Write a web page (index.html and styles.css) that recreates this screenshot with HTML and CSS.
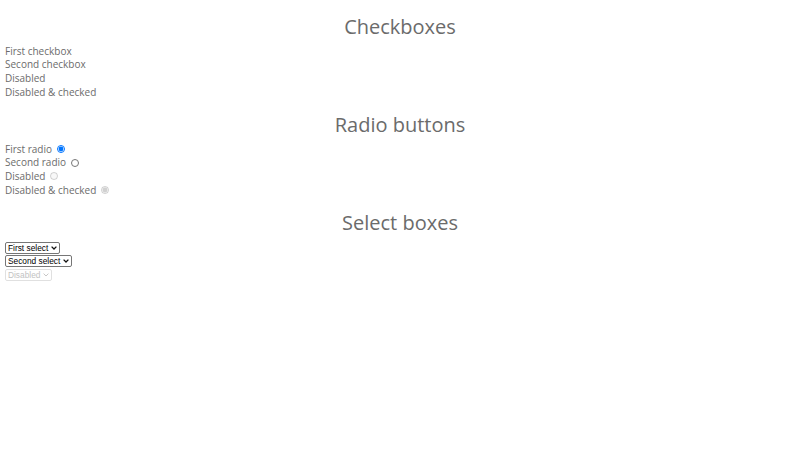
FILE: index.html
```html
<!DOCTYPE html>
<html lang="en">
<head>
    <meta charset="UTF-8">
    <meta name="viewport" content="width=device-width, initial-scale=1.0">
    <title>Form controls</title>
    <link rel="stylesheet" href="styles.css">
</head>
<body>
    <!-- Checkboxes -->
    <section class="group">
        <h1>Checkboxes</h1>
        <label class="option"><input type="checkbox" class="check"> First checkbox</label>
        <label class="option"><input type="checkbox" class="check" checked> Second checkbox</label>
        <label class="option"><input type="checkbox" class="check" disabled> Disabled</label>
        <label class="option"><input type="checkbox" class="check" disabled checked> Disabled &amp; checked</label>
    </section>

    <!-- Radio buttons -->
    <section class="group">
        <h1>Radio buttons</h1>
        <label class="option">First radio <input type="radio" name="demo" class="radio" checked></label>
        <label class="option">Second radio <input type="radio" name="demo" class="radio"></label>
        <label class="option">Disabled <input type="radio" name="off" class="radio" disabled></label>
        <label class="option">Disabled &amp; checked <input type="radio" name="off2" class="radio" disabled checked></label>
    </section>

    <!-- Select boxes -->
    <section class="group">
        <h1>Select boxes</h1>
        <div class="field">
            <select class="picker">
                <option>First select</option>
                <option>Option 2</option>
            </select>
        </div>
        <div class="field">
            <select class="picker">
                <option>Second select</option>
                <option>Option 2</option>
            </select>
        </div>
        <div class="field">
            <select class="picker" disabled>
                <option>Disabled</option>
            </select>
        </div>
    </section>
</body>
</html>
```

FILE: styles.css
```css
body {
    font-family: 'Open Sans', sans-serif;
    color: #6b6b6b;
    background: #ffffff;
    margin: 0;
    padding: 0 5px;
}

h1 {
    font-size: 20px;
    font-weight: 400;
    line-height: 27.2px;
    text-align: center;
    margin: 13.4px 0 4px;
}

.group + .group h1 {
    margin-top: 12px;
}

.option {
    display: block;
    font-size: 10px;
    line-height: 13.7px;
    height: 13.7px;
}

/* checkboxes are styled away entirely */
.check {
    appearance: none;
    -webkit-appearance: none;
    display: none;
}

.radio {
    width: 8px;
    height: 8px;
    margin: 0 0 0 2px;
    vertical-align: -0.5px;
}

.field {
    font-size: 10px;
    line-height: 13.6px;
    height: 13.6px;
}

/* small select with a drawn chevron */
.picker {
    -webkit-appearance: none;
    appearance: none;
    box-sizing: border-box;
    height: 12px;
    margin: 0;
    padding: 0 10px 0 2px;
    font-family: 'Liberation Sans', Arial, sans-serif;
    font-size: 8.33px;
    line-height: 10px;
    color: #000;
    border: 1px solid #767676;
    border-radius: 2px;
    background: #fff url("data:image/svg+xml,%3Csvg xmlns='http://www.w3.org/2000/svg' viewBox='0 0 6 4'%3E%3Cpath d='M0.6 0.6 3 3 5.4 0.6' fill='none' stroke='%23111' stroke-width='1.3'/%3E%3C/svg%3E") no-repeat right 2px center / 6px 4px;
    vertical-align: middle;
}

.picker:disabled {
    color: #a9a9a9;
    border-color: #d4d4d4;
    background-image: url("data:image/svg+xml,%3Csvg xmlns='http://www.w3.org/2000/svg' viewBox='0 0 6 4'%3E%3Cpath d='M0.6 0.6 3 3 5.4 0.6' fill='none' stroke='%23b0b0b0' stroke-width='1'/%3E%3C/svg%3E");
}
```
